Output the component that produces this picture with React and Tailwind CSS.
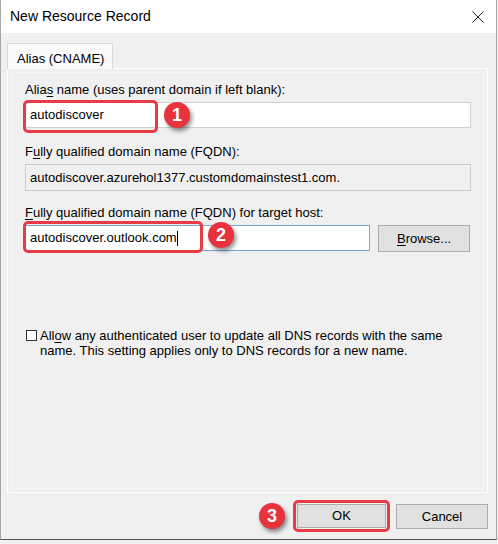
import React from "react";

function Badge({ n, className }) {
    return (
        <div
            className={`absolute flex items-center justify-center w-[26px] h-[26px] rounded-full bg-[#e8323c] text-white text-[18px] font-bold shadow-[2px_3px_4px_rgba(0,0,0,0.45)] ${className}`}
        >
            {n}
        </div>
    );
}

function Key({ children }) {
    return <span className="underline underline-offset-2">{children}</span>;
}

export default function App() {
    return (
        <div
            className="w-[498px] h-[544px] bg-[#f0f0f0] text-[13px] text-black"
            style={{ fontFamily: '"Liberation Sans", Arial, sans-serif' }}
        >
            <div className="w-[497px] h-[540px] flex flex-col border border-t-0 border-[#a6a6a6] border-b-[#555]">
                {/* Title bar */}
                <div className="h-[33px] bg-white flex items-center justify-between pl-[9px] pr-[11px]">
                    <span className="text-[14px]">New Resource Record</span>
                    <svg width="12" height="12" viewBox="0 0 12 12" className="mr-[1px]">
                        <path d="M0.5 0.5 L11.5 11.5 M11.5 0.5 L0.5 11.5" stroke="#222" strokeWidth="1" />
                    </svg>
                </div>

                {/* Body */}
                <div className="flex-1 flex flex-col px-[6px] pt-[10px]">
                    <div className="w-[106px] h-[26px] -mb-px relative z-10 bg-[#f9f9f9] border border-b-0 border-[#d9d9d9] pl-[9px] pt-[5px]">
                        Alias (CNAME)
                    </div>
                    <div className="w-[481px] h-[425px] border border-white p-[3px]">
                        <div className="relative h-full border border-[#f7f7f7] px-[13px] pt-[9px]">
                            <div className="leading-[15px]">
                                Alia<Key>s</Key> name (uses parent domain if left blank):
                            </div>
                            <div className="mt-[5px] w-[446px] h-[26px] bg-white border border-[#d0d0d0] flex items-center pl-[4px]">
                                autodiscover
                            </div>

                            <div className="mt-[16px] leading-[15px]">
                                F<Key>u</Key>lly qualified domain name (FQDN):
                            </div>
                            <div className="mt-[5px] w-[446px] h-[27px] bg-[#f0f0f0] border border-[#cccccc] flex items-center pl-[4px]">
                                autodiscover.azurehol1377.customdomainstest1.com.
                            </div>

                            <div className="mt-[14px] leading-[15px]">
                                <Key>F</Key>ully qualified domain name (FQDN) for target host:
                            </div>
                            <div className="mt-[5px] flex gap-[8px]">
                                <div className="w-[346px] h-[26px] bg-white border border-[#7aa7d9] flex items-center pl-[4px]">
                                    autodiscover.outlook.com
                                    <span className="inline-block w-px h-[15px] bg-black" />
                                </div>
                                <div className="w-[92px] h-[27px] bg-[#e1e1e1] border border-[#adadad] flex items-center justify-center">
                                    <Key>B</Key>rowse...
                                </div>
                            </div>

                            <div className="mt-[76px] flex items-start gap-[3px]">
                                <div className="mt-[2px] ml-px w-[11px] h-[11px] shrink-0 bg-white border border-[#333]" />
                                <div className="leading-[15px]">
                                    All<Key>o</Key>w any authenticated user to update all DNS records with the same
                                    <br />
                                    name. This setting applies only to DNS records for a new name.
                                </div>
                            </div>

                            {/* highlights */}
                            <div className="absolute left-[11px] top-[27px] w-[135px] h-[33px] border-[3px] border-[#ea3a45] rounded-[5px]" />
                            <Badge n="1" className="left-[152px] top-[29px]" />
                            <div className="absolute left-[11px] top-[148px] w-[180px] h-[32px] border-[3px] border-[#ea3a45] rounded-[5px]" />
                            <Badge n="2" className="left-[196px] top-[149px]" />
                        </div>
                    </div>

                    {/* Footer */}
                    <div className="relative flex justify-end gap-[10px] mt-[11px] pr-[2px] text-[13px]">
                        <div className="w-[89px] h-[24px] bg-[#e1e1e1] border border-[#adadad] flex items-center justify-center">
                            OK
                        </div>
                        <div className="w-[92px] h-[25px] bg-[#e1e1e1] border border-[#adadad] flex items-center justify-center">
                            Cancel
                        </div>
                        <div className="absolute left-[286px] -top-[4px] w-[97px] h-[32px] border-[3px] border-[#ea3a45] rounded-[5px]" />
                        <Badge n="3" className="left-[252px] -top-[1px]" />
                    </div>
                </div>
            </div>
        </div>
    );
}
